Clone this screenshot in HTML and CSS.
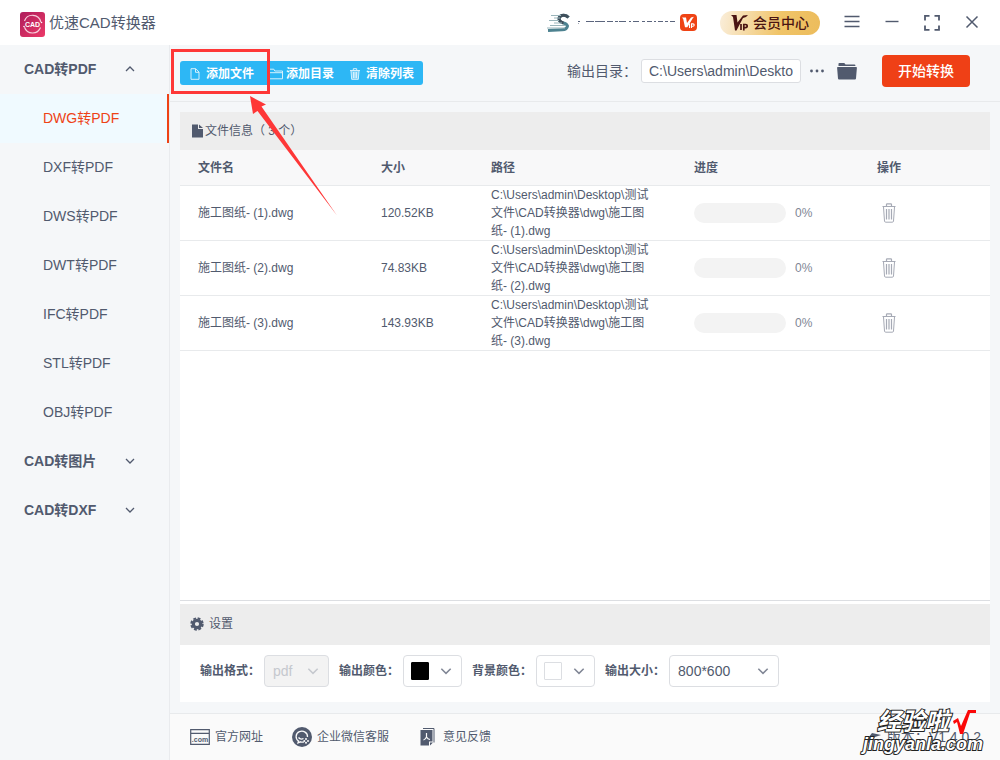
FILE: index.html
```html
<!DOCTYPE html>
<html lang="zh-CN">
<head>
<meta charset="utf-8">
<title>优速CAD转换器</title>
<link rel="stylesheet" href="styles.css">
</head>
<body>
<svg class="defs" aria-hidden="true">
  <symbol id="down" viewBox="0 0 12 12"><path d="M2 4l4 4 4-4" fill="none" stroke="currentColor" stroke-width="1.3"/></symbol>
  <symbol id="up" viewBox="0 0 12 12"><path d="M2 8l4-4 4 4" fill="none" stroke="currentColor" stroke-width="1.3"/></symbol>
  <symbol id="bin" viewBox="0 0 14 20"><g fill="none" stroke="currentColor"><path d="M.5 3.500h13M4.500 3V1.500q0-.7.700-.7h3.600q.7 0 .7.700V3" stroke-width="1.200"/><path d="M1.500 4l1 14q.1 1.200 1.200 1.200h6.600q1.100 0 1.200-1.200l1-14"/><path d="M4.500 6v10.500M7 6v10.500M9.500 6v10.500" stroke-width="1.200"/></g></symbol>
</svg>

<div class="app">
  <header class="titlebar">
    <div class="brand">
      <svg width="25" height="25" viewBox="0 0 25 25" aria-hidden="true">
        <defs><linearGradient id="lg" x1="0" y1="0" x2="1" y2="1"><stop offset="0" stop-color="#ad1d5b"/><stop offset="1" stop-color="#ec3a68"/></linearGradient></defs>
        <rect width="25" height="25" rx="3" fill="url(#lg)"/>
        <path d="M4.500 9a8.500 8.500 0 0 1 16.300.8M20.500 15.500a8.500 8.500 0 0 1-16-.3" fill="none" stroke="#f7cfdc" stroke-width="1.200"/>
        <circle cx="21.500" cy="10.500" r=".8" fill="#fff"/><circle cx="4" cy="14.500" r=".8" fill="#fff"/>
        <text x="12.500" y="15" class="logo-text">CAD</text>
      </svg>
      <h1 class="brand-name">优速CAD转换器</h1>
    </div>
    <div class="account">
      <svg width="26" height="20" viewBox="0 0 26 20" aria-hidden="true">
        <path d="M22.500 4.500Q20 1.500 16 2.500t-2.500 5q1 2 4 2.500t4 3q-.5 3.500-5.500 3.800L2 17.500" fill="none" stroke="#4d8290" stroke-width="3"/>
        <path d="M22.500 4.500Q20 1.500 16 2.500t-2.500 5q1 2 4 2.500" fill="none" stroke="#40505c" stroke-width="3"/>
        <path d="M5 2.500h10M8 5h6M3 7.500h10M8 10h8M4 12.500h15M1 15h18" stroke="#9ab5bb" stroke-width="1"/>
      </svg>
      <svg class="user-line" width="98" height="10" viewBox="0 0 98 10" aria-hidden="true">
        <path d="M1 3.500h2M9 3.500h8m1 0h10m2 0h6m2 0h3m1 0h7m3 0h2m2 0h6m3 0h3m2 0h5m2 0h2m2 0h5m2 0h3m2 0h5m2 0h2" stroke="#5b657d"/>
        <path d="M1 5.500h1" stroke="#a2a8b4"/>
      </svg>
      <svg class="badge" width="17" height="17" viewBox="0 0 17 17" aria-hidden="true">
        <rect width="17" height="17" rx="4" fill="#ef4314"/>
        <path d="M2 3.500h4l1 5.500 4-5.500 3-.8-1.200 1.600-5.500 9H5L3.200 5z" fill="#fff"/>
        <path d="M9.500 9.500v4.500M11.500 14V9.900h1.500q1.200 0 1.200 1.200t-1.200 1.200h-1.500" stroke="#fff" stroke-width="1.100" fill="none"/>
      </svg>
      <button class="vip">
        <svg width="18" height="18" viewBox="0 0 18 18" aria-hidden="true">
          <path d="M0 1h5.500l1 7.500L12 1.500 17 1l-2 2-3 1-6.500 12.500H4L2 3z" fill="#4a1412"/>
          <path d="M10 10v6M12.800 16.500v-6h1.700q1.700 0 1.700 1.600t-1.700 1.600h-1.700" stroke="#4a1412" stroke-width="1.700" fill="none"/>
        </svg>会员中心</button>
    </div>
    <div class="window-controls">
      <button class="icon-btn" aria-label="菜单"><svg width="16" height="16" viewBox="0 0 16 16"><path d="M.5 1.500h15M.5 6.500h15M.5 11.500h15" stroke="currentColor" stroke-width="1.400"/></svg></button>
      <button class="icon-btn" aria-label="最小化"><svg width="16" height="16" viewBox="0 0 16 16"><path d="M1.500 6.500h13" stroke="currentColor" stroke-width="1.400"/></svg></button>
      <button class="icon-btn" aria-label="最大化"><svg width="16" height="16" viewBox="0 0 16 16"><path d="M1 4.500V0h4.500M10.500 0H15v4.500M15 9.500V14h-4.500M5.500 14H1V9.500" fill="none" stroke="currentColor" stroke-width="1.800" transform="translate(0 .9)"/></svg></button>
      <button class="icon-btn" aria-label="关闭"><svg width="16" height="16" viewBox="0 0 16 16"><path d="M2.500 1.500l11 11M13.500 1.500l-11 11" stroke="currentColor" stroke-width="1.500"/></svg></button>
    </div>
  </header>

  <nav class="sidebar">
    <button class="group">CAD转PDF<svg width="12" height="12"><use href="#up"/></svg></button>
    <a class="item active" href="#dwg">DWG转PDF</a>
    <a class="item" href="#dxf">DXF转PDF</a>
    <a class="item" href="#dws">DWS转PDF</a>
    <a class="item" href="#dwt">DWT转PDF</a>
    <a class="item" href="#ifc">IFC转PDF</a>
    <a class="item" href="#stl">STL转PDF</a>
    <a class="item" href="#obj">OBJ转PDF</a>
    <button class="group">CAD转图片<svg width="12" height="12"><use href="#down"/></svg></button>
    <button class="group">CAD转DXF<svg width="12" height="12"><use href="#down"/></svg></button>
  </nav>

  <main class="main">
    <div class="toolbar">
      <div class="actions">
        <button class="action"><svg width="10" height="12" viewBox="0 0 10 12"><path d="M1 .7h4.800L9 4v7.300H1zM5.500 1v3.300H9" fill="none" stroke="currentColor"/></svg>添加文件</button>
        <button class="action folder"><svg width="14" height="12" viewBox="0 0 14 12"><path d="M.5 10.800V1.200h4.300l1 1.800h7.700v7.800zM.5 4.700h13" fill="none" stroke="currentColor"/></svg>添加目录</button>
        <button class="action"><svg width="10" height="12" viewBox="0 0 10 12"><path d="M1 3h8l-.7 8.500H1.700z" fill="currentColor" opacity=".45"/><path d="M0 2.500h10M3.300 2V.7h3.400V2M1 3l.7 8.300h6.600L9 3M3.500 4v6M5 4v6M6.500 4v6" fill="none" stroke="currentColor"/></svg>清除列表</button>
      </div>
      <div class="output">
        <label for="dir">输出目录：</label>
        <input id="dir" class="dir" type="text" value="C:\Users\admin\Deskto">
        <button class="icon-btn dots" aria-label="更多"><svg width="16" height="16" viewBox="0 0 16 16" fill="currentColor"><circle cx="2.500" cy="8" r="1.400"/><circle cx="8" cy="8" r="1.400"/><circle cx="13.500" cy="8" r="1.400"/></svg></button>
        <button class="icon-btn open" aria-label="打开目录"><svg width="20" height="18" viewBox="0 0 20 18" fill="currentColor"><path d="M1.500 4V1.800Q1.500 1 2.300 1h5l1.200 1.500h9q.9 0 .9.900V4z"/><path d="M.8 5h18.400q.7 0 .7.800L19 16.500q-.1 1-1 1H2q-.9 0-1-1L.1 5.800Q0 5 .8 5z"/></svg></button>
        <button class="start">开始转换</button>
      </div>
    </div>

    <div class="content">
      <section class="files">
        <h2 class="bar files-bar"><svg width="11" height="14" viewBox="0 0 11 14"><path d="M0 .5h6V5h5v8.500H0zM7 .5L11 4H7z" fill="currentColor"/></svg>文件信息（ 3 个）</h2>
        <table class="table">
          <colgroup><col class="c-name"><col class="c-size"><col class="c-path"><col class="c-progress"><col class="c-op"></colgroup>
          <thead><tr><th>文件名</th><th>大小</th><th>路径</th><th>进度</th><th>操作</th></tr></thead>
          <tbody>
            <tr><td>施工图纸- (1).dwg</td><td>120.52KB</td><td class="path">C:\Users\admin\Desktop\测试文件\CAD转换器\dwg\施工图纸- (1).dwg</td><td><div class="progress"><span class="track"></span>0%</div></td><td><button class="icon-btn delete" aria-label="删除"><svg width="14" height="20"><use href="#bin"/></svg></button></td></tr>
            <tr><td>施工图纸- (2).dwg</td><td>74.83KB</td><td class="path">C:\Users\admin\Desktop\测试文件\CAD转换器\dwg\施工图纸- (2).dwg</td><td><div class="progress"><span class="track"></span>0%</div></td><td><button class="icon-btn delete" aria-label="删除"><svg width="14" height="20"><use href="#bin"/></svg></button></td></tr>
            <tr><td>施工图纸- (3).dwg</td><td>143.93KB</td><td class="path">C:\Users\admin\Desktop\测试文件\CAD转换器\dwg\施工图纸- (3).dwg</td><td><div class="progress"><span class="track"></span>0%</div></td><td><button class="icon-btn delete" aria-label="删除"><svg width="14" height="20"><use href="#bin"/></svg></button></td></tr>
          </tbody>
        </table>
      </section>

      <section class="settings">
        <h2 class="bar settings-bar"><svg width="14" height="14" viewBox="0 0 14 14"><circle cx="7" cy="7" r="3.700" fill="none" stroke="currentColor" stroke-width="3.200"/><circle cx="7" cy="7" r="5.700" fill="none" stroke="currentColor" stroke-width="2" stroke-dasharray="2.800 1.677"/></svg>设置</h2>
        <div class="fields">
          <div class="field"><label for="fmt">输出格式：</label><span class="select fmt"><select id="fmt" disabled><option>pdf</option></select><svg width="14" height="14"><use href="#down"/></svg></span></div>
          <div class="field"><label for="fg">输出颜色：</label><button id="fg" class="color"><span class="swatch black"></span><svg width="14" height="14"><use href="#down"/></svg></button></div>
          <div class="field"><label for="bg">背景颜色：</label><button id="bg" class="color"><span class="swatch"></span><svg width="14" height="14"><use href="#down"/></svg></button></div>
          <div class="field"><label for="size">输出大小：</label><span class="select size"><select id="size"><option>800*600</option></select><svg width="14" height="14"><use href="#down"/></svg></span></div>
        </div>
      </section>
    </div>

    <footer class="footer">
      <a class="link site" href="#site"><svg width="20" height="16" viewBox="0 0 20 16"><path d="M.7.700h18.600v14.600H.7zM.7 4.300h18.600" fill="none" stroke="currentColor" stroke-width="1.200"/><text x="10" y="13" class="com-text">.com</text></svg>官方网址</a>
      <a class="link chat" href="#chat"><svg width="20" height="20" viewBox="0 0 20 20"><circle cx="10" cy="10" r="10" fill="currentColor"/><g fill="none" stroke="#fafafa" stroke-width="1.300"><path d="M15.500 10A5.700 5.400 0 1 0 6.500 14l-.5 1.800 2.500-1q1.800.5 3.500 0"/><path d="M6.500 10.500q2 2.500 5 1"/></g><circle cx="14" cy="12" r="1" fill="#fafafa"/><circle cx="16" cy="14" r="1" fill="#fafafa"/><circle cx="14" cy="15.800" r="1" fill="#fafafa"/><circle cx="12.300" cy="14" r="1" fill="#fafafa"/></svg>企业微信客服</a>
      <a class="link feedback" href="#feedback"><svg width="15" height="18" viewBox="0 0 15 18"><path d="M3 .5h11v14" fill="none" stroke="currentColor"/><path d="M.5 2h12v11.500H9V17.500H.5zM10 14.500h3L10 17.500z" fill="currentColor"/><path d="M6.500 5v4M3.500 12q2-.5 3-3 1.200 2.200 3.500 2.500" fill="none" stroke="#fafafa" stroke-width="1.200"/></svg>意见反馈</a>
      <span class="version"><svg width="20" height="16" viewBox="0 0 20 16"><path d="M2 13l7-9 9 2-6 2-5 6z" fill="currentColor"/></svg>版本：V1.4.0.2</span>
    </footer>
  </main>

  <div class="highlight"></div>
  <svg class="arrow" width="90" height="122" viewBox="0 0 90 122" aria-hidden="true"><path d="M2 1L18 9.500 13.500 11.500 89 120.500 9.500 16 5 19z" fill="#fe3737"/></svg>
  <div class="watermark">
    <div class="mark-top">经验啦<svg width="24" height="24" viewBox="0 0 24 24" aria-hidden="true"><path d="M0 11l5-3 3 8L15 0h8v3h-6L10 24H7L4 12l-3 2z" fill="#fb0808"/></svg></div>
    <div class="mark-url">jingyanla.com</div>
  </div>
</div>
</body>
</html>
```
FILE: styles.css
```css
* { box-sizing: border-box; }

body {
  margin: 0;
  color: #515a6e;
  background: #f5f7f9;
  font: 12px/18px "Liberation Sans", "Noto Sans CJK SC", sans-serif;
}

button, input, select {
  margin: 0;
  padding: 0;
  border: 0;
  background: none;
  color: inherit;
  font: inherit;
}

svg { display: block; flex: none; }
a { color: inherit; text-decoration: none; }
h1, h2 { margin: 0; font-weight: 400; }
.defs { position: absolute; width: 0; height: 0; }

.app {
  position: relative;
  display: grid;
  grid-template: 45px 1fr / 170px 1fr;
  min-height: 100vh;
  overflow: hidden;
}

/* Title bar */
.titlebar {
  grid-column: 1 / -1;
  display: flex;
  align-items: center;
  padding: 0 20px;
  background: #fff;
}
.brand { display: flex; align-items: center; gap: 4px; margin-right: auto; padding-top: 3px; }
.brand-name { font-size: 15px; line-height: 20px; padding-bottom: 2px; }
.logo-text { font: bold 7px "Liberation Sans", sans-serif; fill: #fff; text-anchor: middle; }
.account { display: flex; align-items: center; }
.user-line { margin-left: 5px; }
.badge { margin-left: 5px; }
.vip {
  display: flex;
  align-items: center;
  gap: 4px;
  width: 100px;
  height: 24px;
  margin-left: 23px;
  padding-left: 11px;
  border-radius: 12px;
  background: linear-gradient(100deg, #faeedb, #f0c468 60%, #ecbc5c);
  color: #4a1412;
  font-size: 14px;
  font-weight: 500;
  line-height: 20px;
  white-space: nowrap;
}
.window-controls { display: flex; gap: 24px; margin-left: 24px; }
.icon-btn { display: block; }

/* Sidebar */
.sidebar { border-right: 1px solid #e9ebee; font-size: 14px; }
.group, .item { display: flex; align-items: center; height: 49px; padding-bottom: 2px; }
.group {
  justify-content: space-between;
  width: 100%;
  padding-left: 24px;
  padding-right: 33px;
  font-weight: 700;
}
.item { padding-left: 43px; }
.active {
  border-right: 2px solid #ee4216;
  background: #f0faff;
  color: #ee4216;
}

/* Toolbar */
.main { display: flex; flex-direction: column; min-width: 0; }
.toolbar {
  display: flex;
  align-items: center;
  justify-content: space-between;
  height: 57px;
  padding: 0 30px 0 10px;
  border-bottom: 1px solid #e8eaec;
}
.actions {
  display: flex;
  height: 24px;
  border-radius: 3px;
  background: #2db7f5;
  color: #fff;
  font-weight: 700;
}
.action { display: flex; align-items: center; gap: 6px; padding: 2px 9px 0 10px; }
.action svg { opacity: .8; }
.folder { gap: 3px; padding: 2px 6px 0; }
.output { display: flex; align-items: center; padding-bottom: 4px; font-size: 14px; }
.dir {
  width: 160px;
  height: 24px;
  margin-left: 4px;
  padding: 0 7px;
  border: 1px solid #dcdee2;
  border-radius: 3px;
  background: #fff;
}
.dots { margin-left: 8px; }
.open { margin-left: 12px; }
.start {
  width: 88px;
  height: 32px;
  margin-left: 25px;
  border-radius: 4px;
  background: #ef4016;
  color: #fff;
  font-weight: 500;
}

/* File list */
.content { flex: 1; display: flex; flex-direction: column; padding: 10px 10px 11px; }
.bar { display: flex; align-items: center; background: #ededed; font-size: 12px; line-height: 18px; }
.files { flex: 1; border-bottom: 1px solid #dcdee2; background: #fff; }
.files-bar { gap: 2px; height: 38px; padding-left: 12px; }
.table { width: 100%; border-collapse: separate; border-spacing: 0; table-layout: fixed; }
.c-name { width: 183px; }
.c-size { width: 110px; }
.c-path { width: 203px; }
.c-progress { width: 183px; }
.table th { height: 36px; background: #f8f8f9; text-align: left; }
.table th, .table td { padding: 0 18px; border-bottom: 1px solid #e8eaec; }
.table td { height: 55px; }
.table .path { padding-right: 20px; word-break: break-all; }
.progress { display: flex; align-items: center; gap: 9px; color: #808695; }
.track { width: 92px; height: 20px; border-radius: 10px; background: #f3f3f3; }
.delete { padding-left: 5px; color: #a6aab5; }

/* Settings */
.settings { border-top: 3px solid #fff; background: #fff; }
.settings-bar { gap: 5px; height: 41px; padding: 0 10px 2px; }
.fields { display: flex; flex-wrap: wrap; gap: 10px; padding: 10px 20px 15px; }
.field { display: flex; align-items: center; gap: 4px; font-weight: 700; }
.select { position: relative; display: block; }
.select select {
  width: 100%;
  height: 32px;
  padding: 0 8px;
  border: 1px solid #dcdee2;
  border-radius: 4px;
  appearance: none;
  font-size: 14px;
  font-weight: 400;
}
.select select:disabled { background: #f3f3f3; color: #c5c8ce; opacity: 1; }
.select svg { position: absolute; top: 9px; right: 9px; color: #808695; pointer-events: none; }
.fmt { width: 65px; }
.fmt svg { color: #c5c8ce; }
.size { width: 110px; }
.color {
  display: flex;
  align-items: center;
  justify-content: space-between;
  width: 59px;
  height: 32px;
  padding: 0 8px 0 7px;
  border: 1px solid #dcdee2;
  border-radius: 4px;
  color: #808695;
}
.swatch { width: 18px; height: 18px; border: 1px solid #dcdee2; border-radius: 1px; }
.black { border-color: #000; background: #000; }

/* Footer */
.footer {
  display: flex;
  align-items: center;
  height: 47px;
  padding: 0 19px 0 20px;
  border-top: 1px solid #e8eaec;
  background: #fafafa;
}
.link { display: flex; align-items: center; gap: 5px; }
.chat { margin-left: 29px; }
.feedback { gap: 8px; margin-left: 31px; }
.com-text { font: bold 7px "Liberation Sans", sans-serif; fill: currentColor; text-anchor: middle; }
.version { display: flex; align-items: center; gap: 4px; margin-left: auto; font-size: 14px; }

/* Annotations drawn over the window */
.highlight {
  position: absolute;
  left: 171px;
  top: 49px;
  width: 99px;
  height: 45px;
  border: 3px solid #fe3737;
  pointer-events: none;
}
.arrow { position: absolute; left: 248px; top: 95px; pointer-events: none; }
.watermark {
  position: absolute;
  right: 17px;
  bottom: 6px;
  color: #fff;
  font-weight: 700;
  font-style: italic;
  -webkit-text-stroke: 2px #222;
  paint-order: stroke fill;
  pointer-events: none;
}
.mark-top { display: flex; align-items: center; gap: 4px; padding-left: 14px; font-size: 24px; line-height: 24px; }
.mark-url { font-size: 18px; line-height: 20px; }
```
